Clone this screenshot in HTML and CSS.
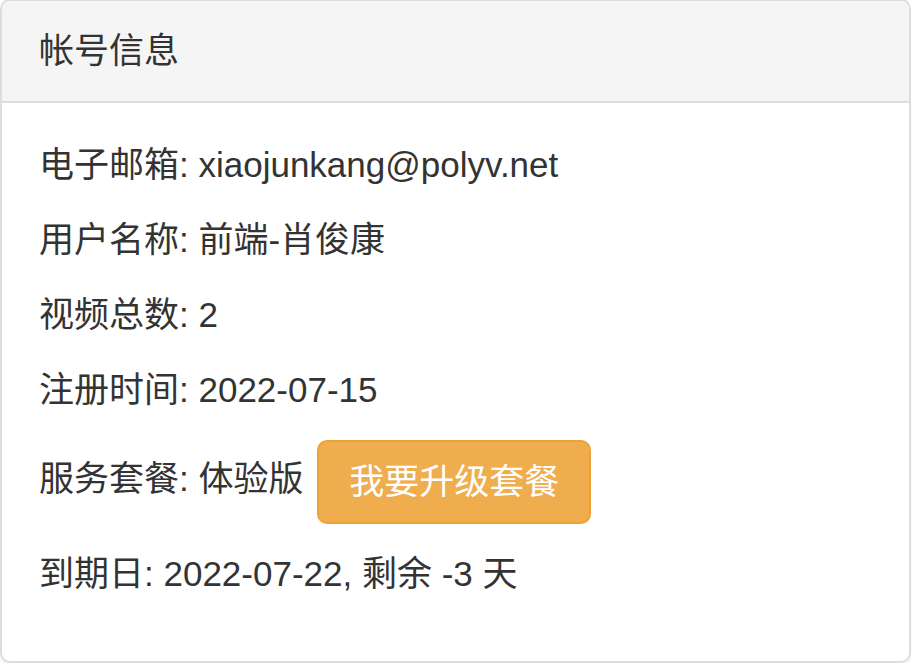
FILE: index.html
```html
<!DOCTYPE html>
<html lang="zh-CN">
<head>
<meta charset="utf-8">
<title>帐号信息</title>
<link rel="stylesheet" href="styles.css">
</head>
<body>
<div class="panel">
  <div class="panel-heading">帐号信息</div>
  <div class="panel-body">
    <p>电子邮箱: xiaojunkang@polyv.net</p>
    <p>用户名称: 前端-肖俊康</p>
    <p>视频总数: 2</p>
    <p>注册时间: 2022-07-15</p>
    <p>服务套餐: 体验版 <a class="btn btn-warning" href="#">我要升级套餐</a></p>
    <p>到期日: 2022-07-22, 剩余 -3 天</p>
  </div>
</div>
</body>
</html>
```
FILE: styles.css
```css
* { box-sizing: border-box; }
html, body { margin: 0; padding: 0; background: #fff; }
body {
  font-family: "Liberation Sans", "Noto Sans CJK SC", sans-serif;
  font-size: 35px;
  line-height: 1.42857143;
  color: #333;
}
.panel {
  margin: -1px 3px 0 0;
  border: 2px solid #ddd;
  border-radius: 10px;
  background: #fff;
  box-shadow: 0 2px 2px rgba(0,0,0,.05);
  overflow: hidden;
}
.panel-heading {
  padding: 25px 37px;
  background: #f5f5f5;
  border-bottom: 2px solid #ddd;
}
.panel-body {
  padding: 37px;
}
.panel-body p {
  margin: 0 0 25px;
}
.btn {
  display: inline-block;
  margin-left: 4px;
  padding: 15px 30px;
  font-size: 35px;
  line-height: 1.42857143;
  text-decoration: none;
  vertical-align: middle;
  border: 2px solid transparent;
  border-radius: 10px;
}
.btn-warning {
  color: #fff;
  background: #f0ad4e;
  border-color: #eea236;
}
```
